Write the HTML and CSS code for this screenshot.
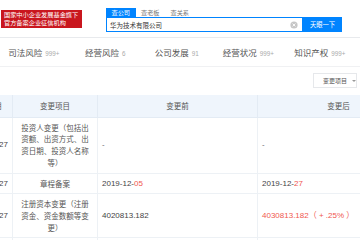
FILE: index.html
```html
<!DOCTYPE html>
<html lang="zh-CN">
<head>
    <meta charset="UTF-8">
    <meta name="viewport" content="width=device-width, initial-scale=1.0">
    <title>变更记录</title>
    <link rel="stylesheet" href="styles.css">
</head>
<body>
    <div class="top">
        <div class="badge">国家中小企业发展基金旗下<br>官方备案企业征信机构</div>
        <div class="search">
            <div class="tabs">
                <span class="tab active">查公司</span>
                <span class="tab">查老板</span>
                <span class="tab">查关系</span>
            </div>
            <div class="search-row">
                <div class="input">
                    <span class="query">华为技术有限公司</span>
                    <svg class="clear" width="8" height="8" viewBox="0 0 8 8">
                        <circle cx="4" cy="4" r="3.6" fill="#c6c6c6"/>
                        <path d="M2.6 2.6 L5.4 5.4 M5.4 2.6 L2.6 5.4" stroke="#fff" stroke-width="0.9"/>
                    </svg>
                </div>
                <div class="btn">天眼一下</div>
            </div>
        </div>
    </div>

    <div class="nav">
        <div class="nav-item">司法风险<span class="count">999+</span></div>
        <div class="nav-item">经营风险<span class="count">6</span></div>
        <div class="nav-item">公司发展<span class="count">91</span></div>
        <div class="nav-item">经营状况<span class="count">999+</span></div>
        <div class="nav-item">知识产权<span class="count">999+</span></div>
    </div>

    <div class="toolbar">
        <div class="select">变更项目<span class="caret"></span></div>
    </div>

    <div class="table-wrap">
        <table class="changes">
            <colgroup>
                <col class="c-date">
                <col class="c-item">
                <col class="c-before">
                <col class="c-after">
            </colgroup>
            <thead>
                <tr>
                    <th>变更日期</th>
                    <th>变更项目</th>
                    <th>变更前</th>
                    <th>变更后</th>
                </tr>
            </thead>
            <tbody>
                <tr>
                    <td class="num date">2019-12-27</td>
                    <td class="center">投资人变更（包括出资额、出资方式、出资日期、投资人名称等）</td>
                    <td>-</td>
                    <td>-</td>
                </tr>
                <tr>
                    <td class="num date">2019-12-27</td>
                    <td class="center">章程备案</td>
                    <td class="num">2019-12-<em>05</em></td>
                    <td class="num">2019-12-<em>27</em></td>
                </tr>
                <tr>
                    <td class="num date">2019-12-27</td>
                    <td class="center">注册资本变更（注册资金、资金数额等变更）</td>
                    <td class="num">4020813.182</td>
                    <td class="num red">4030813.182（ + .25% ）</td>
                </tr>
                <tr>
                    <td class="num date">2019-12-27</td>
                    <td class="center">经营范围变更</td>
                    <td></td>
                    <td></td>
                </tr>
            </tbody>
        </table>
    </div>
</body>
</html>
```

FILE: styles.css
```css
body {
    margin: 0;
    width: 360px;
    height: 240px;
    overflow: hidden;
    background: #fff;
    font-family: "Liberation Sans", "Noto Sans CJK SC", sans-serif;
    color: #333;
}
.top {
    display: flex;
    height: 37px;
    border-bottom: 1px solid #e8eaed;
    padding-left: 1px;
}
.badge {
    margin-top: 10px;
    width: 81px;
    height: 18px;
    padding: 0.5px 3px;
    box-sizing: border-box;
    background: #c9161e;
    color: #fff;
    font-family: "Noto Sans CJK SC", sans-serif;
    font-size: 6.2px;
    line-height: 8.5px;
    white-space: nowrap;
}
.search {
    margin-left: 24px;
    margin-top: 8px;
}
.tabs {
    display: flex;
    height: 9px;
}
.tab {
    width: 29.5px;
    text-align: center;
    font-family: "Noto Sans CJK SC", sans-serif;
    font-size: 6.2px;
    line-height: 9px;
    color: #777;
}
.tab.active {
    background: #0084ff;
    color: #fff;
}
.search-row {
    display: flex;
    height: 15px;
}
.input {
    display: flex;
    align-items: center;
    justify-content: space-between;
    width: 197px;
    box-sizing: border-box;
    border: 1px solid #0084ff;
    padding: 0 4px 0 3px;
}
.query {
    font-family: "Noto Sans CJK SC", sans-serif;
    font-size: 6.5px;
    color: #333;
}
.btn {
    width: 39px;
    background: #0084ff;
    color: #fff;
    text-align: center;
    font-family: "Noto Sans CJK SC", sans-serif;
    font-size: 6.3px;
    line-height: 15px;
}
.nav {
    display: flex;
    height: 28px;
    margin-left: -2px;
    border-bottom: 1px solid #f0f1f3;
}
.nav-item {
    width: 71.5px;
    flex: none;
    text-align: center;
    line-height: 28px;
    font-family: "Noto Sans CJK SC", sans-serif;
    font-size: 8.5px;
    color: #555;
    white-space: nowrap;
}
.count {
    margin-left: 3px;
    font-family: "Liberation Sans", sans-serif;
    font-size: 6.3px;
    color: #aaa;
}
.toolbar {
    display: flex;
    justify-content: flex-end;
    height: 28px;
    padding-right: 3px;
}
.select {
    margin-top: 6px;
    height: 15px;
    width: 44px;
    box-sizing: border-box;
    border: 1px solid #e6e8eb;
    display: flex;
    align-items: center;
    padding-left: 9px;
    font-family: "Noto Sans CJK SC", sans-serif;
    font-size: 6px;
    color: #555;
}
.caret {
    margin-left: 5px;
    border-left: 2.2px solid transparent;
    border-right: 2.2px solid transparent;
    border-top: 2.6px solid #999;
}
.table-wrap {
    overflow: hidden;
}
.changes {
    margin-left: -40px;
    width: 459px;
    table-layout: fixed;
    border-collapse: collapse;
    font-family: "Noto Sans CJK SC", sans-serif;
    font-size: 7.5px;
    line-height: 11.7px;
    color: #555;
}
.c-date { width: 52px; }
.c-item { width: 85px; }
.c-before { width: 160px; }
.c-after { width: 162px; }
.changes th {
    background: #eff5fc;
    border: 1px solid #e3ebf4;
    border-top: none;
    font-weight: normal;
    color: #555;
    padding: 5px 6px;
    text-align: center;
    white-space: nowrap;
}
.changes td {
    border: 1px solid #edf1f5;
    padding: 4px 6px 4px 4px;
    vertical-align: middle;
    text-align: left;
}
.changes td.center {
    text-align: center;
    padding: 4px 6px;
}
.changes td.num {
    font-family: "Liberation Sans", "Noto Sans CJK SC", sans-serif;
    font-size: 8px;
    color: #444;
    white-space: nowrap;
}
.changes td.date {
    text-align: right;
    padding: 4px 4px 4px 0;
}
.changes em {
    font-style: normal;
    color: #f0584f;
}
.changes td.red {
    color: #f0584f;
}
```
